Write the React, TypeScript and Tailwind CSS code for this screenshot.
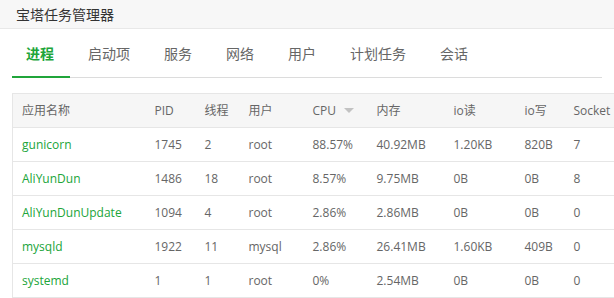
import React from "react";

const tabs = ["进程", "启动项", "服务", "网络", "用户", "计划任务", "会话"];

const cols = [
  { name: "应用名称", w: "w-[133px]" },
  { name: "PID", w: "w-[50px]" },
  { name: "线程", w: "w-[44px]" },
  { name: "用户", w: "w-[64px]" },
  { name: "CPU", w: "w-[64px]", sort: true },
  { name: "内存", w: "w-[77px]" },
  { name: "io读", w: "w-[71px]" },
  { name: "io写", w: "w-[49px]" },
  { name: "Socket", w: "w-[62px]" },
];

const rows = [
  ["gunicorn", "1745", "2", "root", "88.57%", "40.92MB", "1.20KB", "820B", "7"],
  ["AliYunDun", "1486", "18", "root", "8.57%", "9.75MB", "0B", "0B", "8"],
  ["AliYunDunUpdate", "1094", "4", "root", "2.86%", "2.86MB", "0B", "0B", "0"],
  ["mysqld", "1922", "11", "mysql", "2.86%", "26.41MB", "1.60KB", "409B", "0"],
  ["systemd", "1", "1", "root", "0%", "2.54MB", "0B", "0B", "0"],
];

export default function App() {
  return (
    <div
      className="w-[614px] h-[298px] overflow-hidden bg-white text-[#666]"
      style={{ fontFamily: '"Open Sans", "Noto Sans CJK SC", sans-serif' }}
    >
      {/* title bar */}
      <div className="h-[29px] bg-[#f7f7f7] border-b border-[#e8e8e8] pl-[16px] flex items-center text-[14px] text-[#333]">
        宝塔任务管理器
      </div>

      {/* tabs */}
      <div className="px-[12px]">
        <div className="flex h-[49px] border-b border-[#dcdcdc]">
          {tabs.map((t, i) => (
            <div
              key={t}
              className={`relative flex items-center pl-[14px] pr-[16px] mr-[4px] text-[14px] ${
                i === 0 ? "text-[#20a53a] font-bold" : "text-[#666]"
              }`}
            >
              {t}
              {i === 0 && (
                <span className="absolute left-0 right-0 bottom-[-1px] h-[2px] bg-[#20a53a]" />
              )}
            </div>
          ))}
        </div>

        {/* table */}
        <div className="mt-[15px] w-[640px]">
          <table className="border-collapse table-fixed text-[12px]">
            <thead>
              <tr className="h-[34px] bg-[#f6f6f6]">
                {cols.map((c) => (
                  <th
                    key={c.name}
                    className={`${c.w} border-y border-[#e6e6e6] first:border-l text-left font-normal pl-[9px] text-[#666]`}
                  >
                    <span className="inline-flex items-center gap-[8px]">
                      {c.name}
                      {c.sort && (
                        <svg width="10" height="6" viewBox="0 0 10 6">
                          <path d="M0 0 L10 0 L5 5 Z" fill="#c2c2c2" />
                        </svg>
                      )}
                    </span>
                  </th>
                ))}
              </tr>
            </thead>
            <tbody>
              {rows.map((r) => (
                <tr key={r[0]} className="h-[34px]">
                  {r.map((v, j) => (
                    <td
                      key={j}
                      className={`border-b border-[#e6e6e6] first:border-l pl-[9px] whitespace-nowrap ${
                        j === 0 ? "text-[#20a53a]" : "text-[#666]"
                      }`}
                    >
                      {v}
                    </td>
                  ))}
                </tr>
              ))}
            </tbody>
          </table>
        </div>
      </div>
    </div>
  );
}
